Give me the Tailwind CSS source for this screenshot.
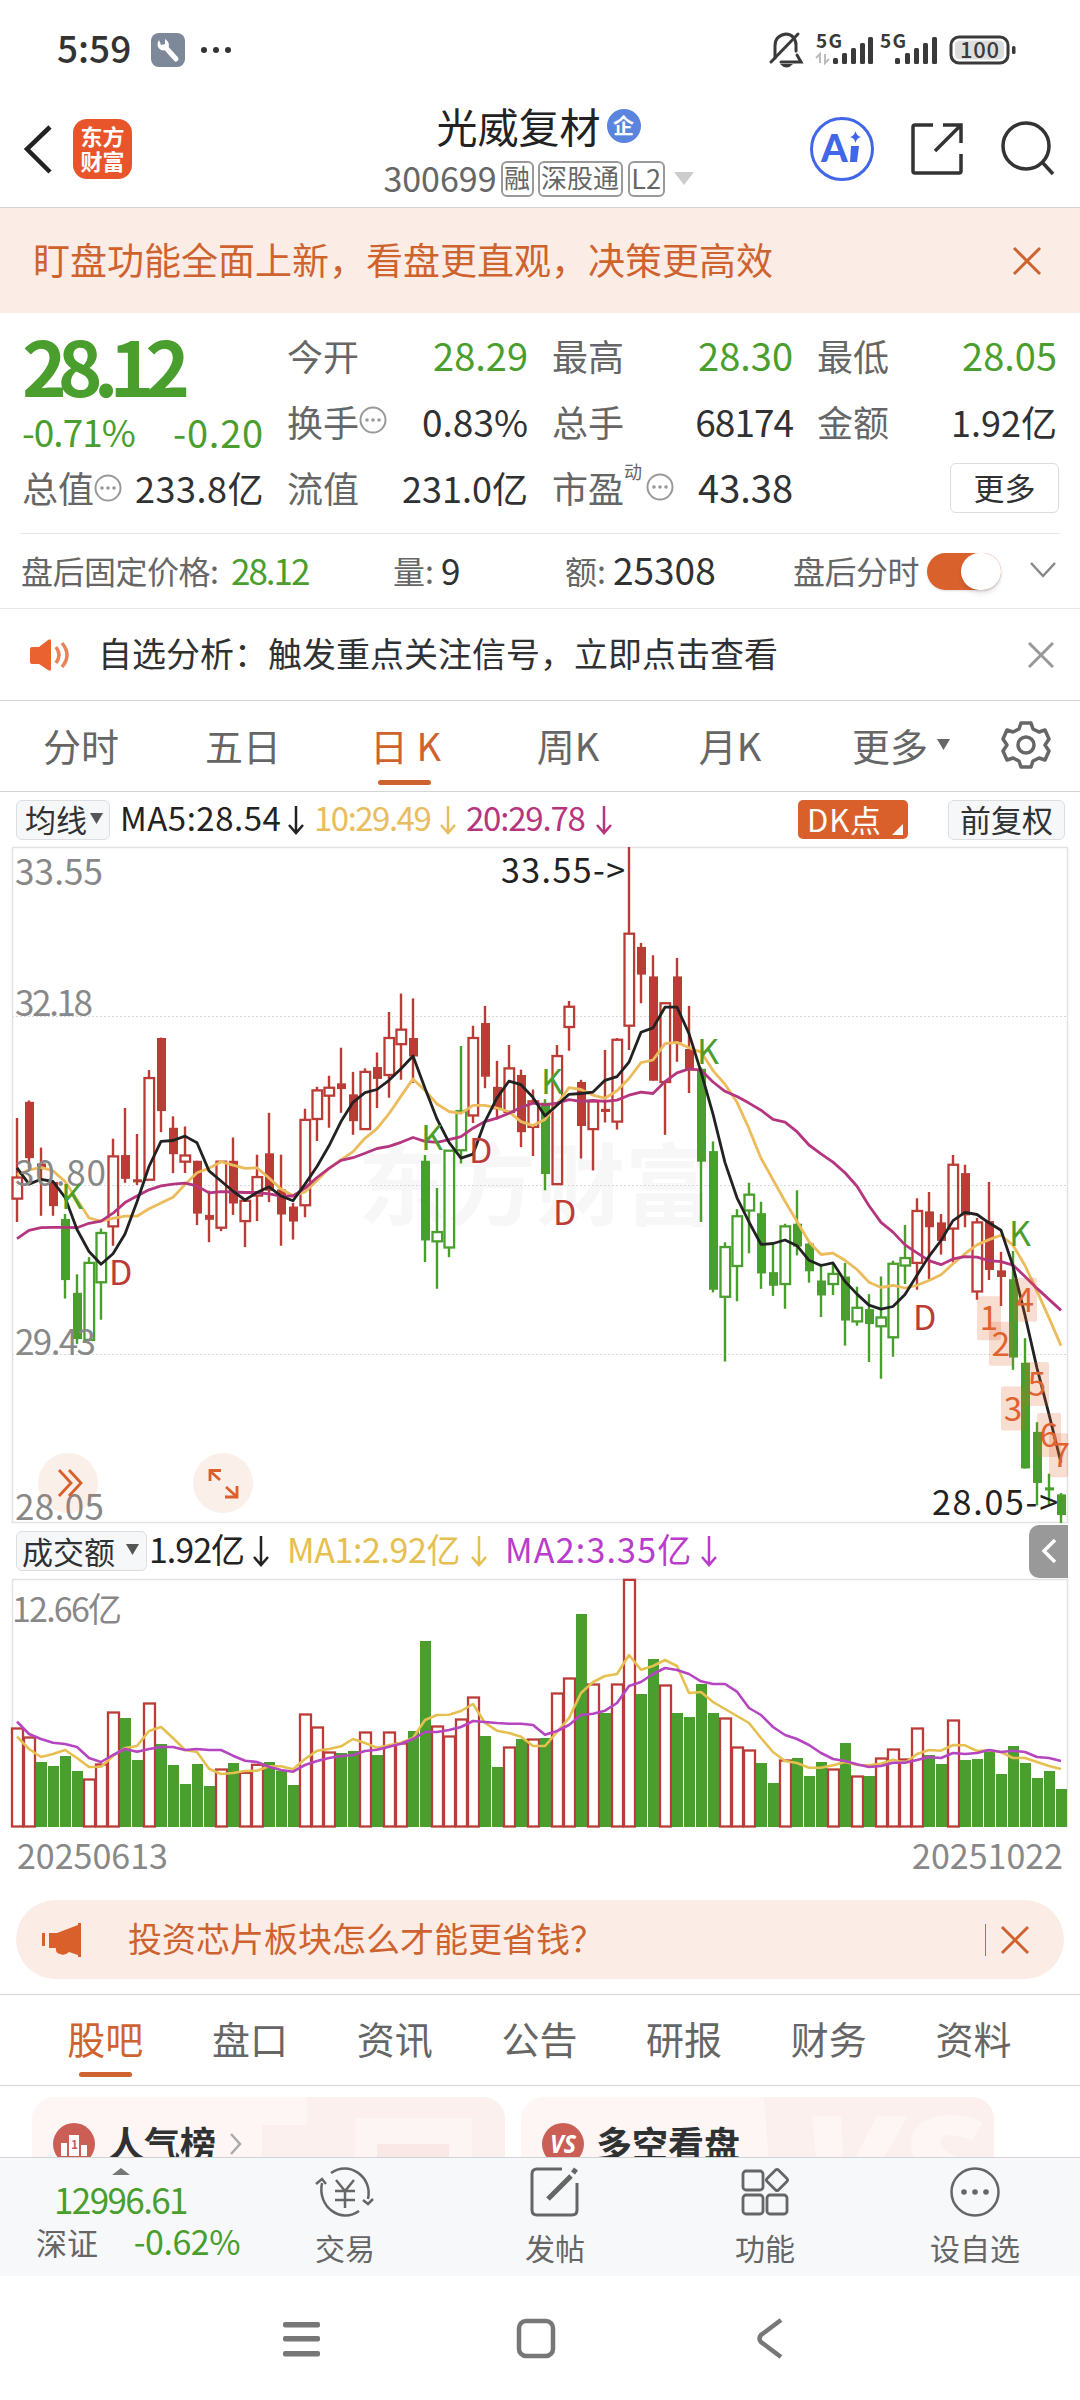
<!DOCTYPE html>
<html lang="zh-CN">
<head>
    <meta charset="UTF-8">
    <meta name="viewport" content="width=device-width, initial-scale=1.0">
    <title>光威复材 300699</title>
    <script src="https://cdn.jsdelivr.net/npm/@tailwindcss/browser@4"></script>
</head>
<body class="w-[1080px] h-[2400px] overflow-hidden bg-white text-[#303133] font-['Noto_Sans_CJK_SC',sans-serif] leading-none whitespace-nowrap">

    <!-- Status bar -->
    <div class="h-[92px] pt-[8px] pl-[57px] flex items-center text-[#333]">
        <span class="w-[94px] text-[37px] font-medium -mt-[5px]">5:59</span>
        <svg class="w-[34px] h-[34px]" viewBox="0 0 34 34">
            <rect width="34" height="34" rx="8" fill="#7d8899"/>
            <path d="M16 16 L25 26" stroke="#fff" stroke-width="5" stroke-linecap="round"/>
            <path d="M8 7 C4 13 9 19 15 17 C20 14 18 8 14 6 L14 11 L10 12 Z" fill="#fff"/>
        </svg>
        <svg class="ml-[15px] w-[32px] h-[8px]" viewBox="0 0 32 8" fill="#333"><circle cx="4" cy="4" r="3"/><circle cx="16" cy="4" r="3"/><circle cx="28" cy="4" r="3"/></svg>
        <svg class="ml-[537px] w-[250px] h-[40px] overflow-visible" viewBox="0 0 250 40">
            <g fill="none" stroke="#3a3a3a" stroke-width="3" stroke-linecap="round">
                <path d="M6 28 V16 C6 9 10 5 17 4 C23 4 27 9 27 15 V21"/>
                <path d="M29 4 L2 32 M12 32 H32 L28 25" />
            </g>
            <path d="M11 34 H24 Q17.500 41 11 34Z" fill="#3a3a3a"/>
            <g fill="#3a3a3a" font-family="Noto Sans CJK SC" font-size="19" font-weight="700">
                <text x="47" y="18" textLength="26">5G</text>
                <text x="111" y="18" textLength="26">5G</text>
            </g>
            <path d="M51 33 V24 L47 28 M56 24 V33 L60 29" fill="none" stroke="#bbb" stroke-width="2"/>
            <g fill="#3a3a3a">
                <rect x="64" y="28" width="5" height="6" rx="1.500"/><rect x="73" y="23" width="5" height="11" rx="1.500"/><rect x="82" y="18" width="5" height="16" rx="1.500"/><rect x="91" y="13" width="5" height="21" rx="1.500"/><rect x="99" y="7" width="5" height="27" rx="1.500"/>
                <rect x="126" y="28" width="5" height="6" rx="1.500"/><rect x="136" y="23" width="5" height="11" rx="1.500"/><rect x="145" y="18" width="5" height="16" rx="1.500"/><rect x="154" y="13" width="5" height="21" rx="1.500"/><rect x="163" y="7" width="5" height="27" rx="1.500"/>
            </g>
            <rect x="182" y="7" width="57" height="26" rx="8" fill="#fff" stroke="#3a3a3a" stroke-width="3"/>
            <rect x="186" y="10.500" width="49" height="19" rx="5" fill="#ddd"/>
            <rect x="243" y="16" width="3.500" height="8" rx="1.500" fill="#3a3a3a"/>
            <text x="191" y="28" font-family="Noto Sans CJK SC" font-size="22" font-weight="500" textLength="39" fill="#3a3a3a">100</text>
        </svg>
    </div>

    <!-- Header -->
    <header class="h-[116px] flex border-b border-[#d3d4d6]">
        <svg class="mt-[32px] ml-[22px] w-[32px] h-[50px]" viewBox="0 0 32 50" fill="none" stroke="#222" stroke-width="4.500"><path d="M28 3 L5 25 L28 48"/></svg>
        <div class="mt-[27px] ml-[19px] w-[59px] h-[60px] rounded-[14px] bg-[#e9552a] text-white font-bold text-[22px] leading-[25px] text-center pt-[4px]">东方<br>财富</div>
        <div class="w-[567px] pl-[246px] pt-[10px] flex flex-col items-center">
            <div class="flex items-center h-[46px]">
                <span class="text-[41px] text-[#222]">光威复材</span>
                <span class="ml-[6px] mt-[2px] w-[34px] h-[34px] rounded-full bg-[#5b84de] text-white text-[21px] font-bold flex items-center justify-center pb-[3px]">企</span>
            </div>
            <div class="flex items-center h-[36px] mt-[13px] text-[#666]">
                <span class="text-[34px] mr-[4px] -mt-[3px]">300699</span>
                <span class="h-[36px] w-[33px] border-2 border-[#999] rounded-[6px] text-[26px] flex justify-center pt-[1px]">融</span>
                <span class="ml-[4px] h-[36px] w-[85px] border-2 border-[#999] rounded-[6px] text-[26px] flex justify-center pt-[1px]">深股通</span>
                <span class="ml-[5px] h-[36px] w-[37px] border-2 border-[#999] rounded-[6px] text-[27px] flex justify-center pt-[1px]">L2</span>
                <svg class="ml-[9px] w-[20px] h-[14px]" viewBox="0 0 20 14"><path d="M0 0 H20 L10 13Z" fill="#ccc"/></svg>
            </div>
        </div>
        <svg class="mt-[24px] ml-[110px] w-[66px] h-[66px]" viewBox="0 0 66 66">
            <circle cx="33" cy="33" r="30.500" fill="#fff" stroke="#4166e8" stroke-width="3"/>
            <text x="12" y="46" font-family="Lato" font-weight="900" font-size="38" fill="#4166e8">A</text>
            <path d="M42 30 H50 L48 46 H41Z" fill="#4166e8"/>
            <path d="M46.500 15 Q47.500 20 52 21 Q47.500 22 46.500 27 Q45.500 22 41 21 Q45.500 20 46.500 15Z" fill="#4166e8"/>
        </svg>
        <svg class="mt-[28px] ml-[34px] w-[56px] h-[56px]" viewBox="0 0 56 56" fill="none" stroke="#333" stroke-width="3.500"><path d="M24 5 H6 Q4 5 4 7 V51 Q4 53 6 53 H50 Q52 53 52 51 V34 M34 5 H52 V23 M51 6 L26 31"/></svg>
        <svg class="mt-[26px] ml-[34px] w-[58px] h-[58px]" viewBox="0 0 58 58" fill="none" stroke="#333" stroke-width="3.500"><circle cx="27" cy="28" r="23"/><path d="M43 44 L54 56"/></svg>
    </header>

    <!-- Notice banner -->
    <div class="h-[105px] pl-[33px] pr-[38px] flex items-center justify-between bg-[#fbede6] text-[#cf632f]">
        <span class="text-[37px] -mt-[2px]">盯盘功能全面上新，看盘更直观，决策更高效</span>
        <svg class="w-[30px] h-[30px]" viewBox="0 0 30 30" stroke="#cf632f" stroke-width="3"><path d="M2 2 L28 28 M28 2 L2 28"/></svg>
    </div>

    <!-- Quote -->
    <section class="h-[221px] mx-[20px] border-b border-[#e8e8e8] flex text-[36px]">
        <div class="w-[244px] pl-[2px] pt-[9px] text-[#4a9e2e]">
            <div class="h-[87px] text-[76px] font-bold tracking-[-9px] leading-[84px]">28.12</div>
            <div class="h-[45px] flex items-center justify-between text-[37px]"><span class="tracking-[-1px]">-0.71%</span><span class="text-[38px] tracking-[0.800px]">-0.20</span></div>
            <div class="h-[66px] flex items-center text-[#303133]">
                <span class="text-[#666]">总值</span>
                <svg class="mt-[2px] w-[28px] h-[28px] shrink-0" viewBox="0 0 28 28" fill="#999"><circle cx="14" cy="14" r="12.500" fill="none" stroke="#999" stroke-width="2"/><circle cx="8" cy="14" r="1.800"/><circle cx="14" cy="14" r="1.800"/><circle cx="20" cy="14" r="1.800"/></svg>
                <span class="ml-auto tracking-[0.500px]">233.8亿</span>
            </div>
        </div>
        <div class="ml-[23px] pt-[9px] w-[771px] grid grid-cols-[241px_241px_240px] gap-x-[24px] grid-rows-[66px_66px_66px]">
            <div class="flex items-center justify-between"><span class="text-[#666]">今开</span><span class="text-[#4a9e2e] text-[38px]">28.29</span></div>
            <div class="flex items-center justify-between"><span class="text-[#666]">最高</span><span class="text-[#4a9e2e] text-[38px]">28.30</span></div>
            <div class="flex items-center justify-between"><span class="text-[#666]">最低</span><span class="text-[#4a9e2e] text-[38px]">28.05</span></div>
            <div class="flex items-center">
                <span class="text-[#666]">换手</span>
                <svg class="mt-[-2px] w-[28px] h-[28px]" viewBox="0 0 28 28" fill="#999"><circle cx="14" cy="14" r="12.500" fill="none" stroke="#999" stroke-width="2"/><circle cx="8" cy="14" r="1.800"/><circle cx="14" cy="14" r="1.800"/><circle cx="20" cy="14" r="1.800"/></svg>
                <span class="ml-auto text-[37px]">0.83%</span>
            </div>
            <div class="flex items-center justify-between"><span class="text-[#666]">总手</span><span class="text-[37px] tracking-[-1px]">68174</span></div>
            <div class="flex items-center justify-between"><span class="text-[#666]">金额</span><span>1.92亿</span></div>
            <div class="flex items-center justify-between"><span class="text-[#666]">流值</span><span>231.0亿</span></div>
            <div class="flex items-center">
                <span class="text-[#666]">市盈</span><span class="text-[18px] text-[#666] -mt-[32px]">动</span>
                <svg class="ml-[4px] w-[28px] h-[28px] shrink-0" viewBox="0 0 28 28" fill="#999"><circle cx="14" cy="14" r="12.500" fill="none" stroke="#999" stroke-width="2"/><circle cx="8" cy="14" r="1.800"/><circle cx="14" cy="14" r="1.800"/><circle cx="20" cy="14" r="1.800"/></svg>
                <span class="ml-auto text-[38px]">43.38</span>
            </div>
            <div class="flex items-center justify-end -mr-[2px]"><span class="w-[109px] h-[50px] mt-[2px] border border-[#ddd] rounded-[6px] text-[31px] flex items-center justify-center pb-[3px]">更多</span></div>
        </div>
    </section>

    <!-- After-hours -->
    <div class="h-[75px] pb-[3px] pl-[21px] pr-[23px] flex items-center border-b border-[#e8e8e8] text-[32px] text-[#666]">
        <span class="w-[210px] tracking-[-0.500px]">盘后固定价格:</span><span class="w-[162px] text-[35px] text-[#4a9e2e] tracking-[-2px]">28.12</span>
        <span class="w-[48px]">量:</span><span class="w-[124px] text-[35px] text-[#303133]">9</span>
        <span class="w-[48px]">额:</span><span class="w-[180px] text-[37px] text-[#303133]">25308</span>
        <span class="w-[134px] tracking-[-0.500px]">盘后分时</span>
        <span class="mt-[4px] w-[74px] h-[37px] rounded-full bg-[#d9622c] flex justify-end shadow-sm"><span class="w-[40px] h-[37px] rounded-full bg-white shadow-md"></span></span>
        <svg class="ml-[28px] w-[28px] h-[18px]" viewBox="0 0 28 18" fill="none" stroke="#888" stroke-width="2.500"><path d="M2 2 L14 15 L26 2"/></svg>
    </div>

    <!-- Signal notice -->
    <div class="h-[92px] pl-[29px] pr-[26px] flex items-center border-b border-[#d3d4d6]">
        <svg class="w-[42px] h-[34px]" viewBox="0 0 42 34"><path d="M1 11 Q1 9 3 9 H10 L19 2 Q22 0 22 3 V31 Q22 34 19 32 L10 26 H3 Q1 26 1 24Z" fill="#e9622f"/><path d="M27 9 Q33 17 27 25 M33 5 Q43 17 33 29" fill="none" stroke="#e9835a" stroke-width="3.500"/></svg>
        <span class="ml-[27px] text-[34px] -mt-[4px]">自选分析：触发重点关注信号，立即点击查看</span>
        <svg class="ml-auto w-[26px] h-[26px]" viewBox="0 0 26 26" stroke="#999" stroke-width="3"><path d="M1 1 L25 25 M25 1 L1 25"/></svg>
    </div>

    <!-- Period tabs -->
    <nav class="h-[91px] pb-[3px] flex items-center border-b border-[#d3d4d6] text-[38px] text-[#666]">
        <span class="w-[162px] text-center">分时</span>
        <span class="w-[162px] text-center">五日</span>
        <span class="relative w-[163px] text-center text-[#cf632f]">日 K<i class="absolute left-[54px] top-[54px] w-[53px] h-[5px] rounded-full bg-[#cf632f]"></i></span>
        <span class="w-[162px] text-center">周K</span>
        <span class="w-[162px] text-center">月K</span>
        <span class="ml-[41px] w-[85px]">更多</span>
        <svg class="w-[14px] h-[12px]" viewBox="0 0 14 12"><path d="M0 0 H13 L6.500 11Z" fill="#666"/></svg>
        <svg class="ml-[50px] w-[50px] h-[50px]" viewBox="0 0 50 50" fill="none" stroke="#666" stroke-width="3.500" stroke-linejoin="round"><path d="M20 3 H30 L32 9 L38 12 L44 10 L48 19 L44 25 L48 31 L44 40 L38 38 L32 41 L30 47 H20 L18 41 L12 38 L6 40 L2 31 L6 25 L2 19 L6 10 L12 12 L18 9Z"/><circle cx="25" cy="25" r="8"/></svg>
    </nav>

    <!-- Moving average legend -->
    <div class="h-[55px] pl-[16px] flex items-center text-[33px]">
        <span class="w-[94px] h-[40px] border border-[#dcdee2] rounded-[6px] bg-[#f6f7f9] text-[31px] flex items-center pl-[8px] pb-[2px]">均线<svg class="ml-[3px] w-[13px] h-[12px]" viewBox="0 0 13 12"><path d="M0 0 H13 L6.500 11Z" fill="#555"/></svg></span>
        <span class="ml-[10px] w-[168px] -mt-[4px] tracking-[0.500px] text-[#222]">MA5:28.54</span>
        <svg class="w-[16px] h-[30px]" viewBox="0 0 16 30" fill="none" stroke="#222" stroke-width="2.500"><path d="M8 1 V28 M1 20 L8 28 L15 20"/></svg>
        <span class="ml-[10px] w-[126px] -mt-[4px] tracking-[-1.500px] text-[#e8bd5f]">10:29.49</span>
        <svg class="w-[16px] h-[30px]" viewBox="0 0 16 30" fill="none" stroke="#e8bd5f" stroke-width="2.500"><path d="M8 1 V28 M1 20 L8 28 L15 20"/></svg>
        <span class="ml-[10px] w-[130px] -mt-[4px] tracking-[-1.200px] text-[#b5357f]">20:29.78</span>
        <svg class="w-[16px] h-[30px]" viewBox="0 0 16 30" fill="none" stroke="#b5357f" stroke-width="2.500"><path d="M8 1 V28 M1 20 L8 28 L15 20"/></svg>
        <span class="relative ml-[186px] w-[110px] h-[39px] rounded-[5px] bg-[#d9602b] text-white text-[31px] tracking-[0.800px] flex items-center pl-[9px] pb-[2px]">DK点<svg class="absolute right-[5px] bottom-[4px] w-[11px] h-[11px]" viewBox="0 0 11 11"><path d="M11 0 V11 H0Z" fill="#fff"/></svg></span>
        <span class="ml-[40px] w-[117px] h-[40px] border border-[#dcdee2] rounded-[6px] bg-[#f6f7f9] text-[31px] flex items-center justify-center pb-[2px]">前复权</span>
    </div>

    <!-- Candle chart -->
    <div class="relative h-[676px]">
        <svg id="price" class="block w-[1080px] h-[676px] overflow-visible" viewBox="0 0 1080 676" font-family="Noto Sans CJK SC" font-size="34">
            <text x="358" y="371" font-size="89" font-weight="700" fill="#f7f7f7">东方财富</text>
            <g stroke="#d8d8d8" stroke-dasharray="2 2"><path d="M12 169.500 H1068 M12 338.500 H1068 M12 507.500 H1068"/></g>
            <rect x="12.500" y="0.500" width="1055" height="675" fill="none" stroke="#e2e2e2" stroke-width="1.500"/>
            <g id="candles"></g>
            <g id="priceLines" fill="none" stroke-width="2.800" stroke-linejoin="round"></g>
            <g fill="#888" font-size="35">
                <text x="15" y="38" textLength="88">33.55</text><text x="15" y="169" textLength="78">32.18</text><text x="15" y="339" textLength="91">30.80</text><text x="15" y="508" textLength="81">29.43</text><text x="15" y="673" textLength="89">28.05</text>
            </g>
            <g id="marks"></g>
            <text x="501" y="36" textLength="124" fill="#222">33.55-&gt;</text>
            <text x="932" y="668" textLength="126" fill="#222">28.05-&gt;</text>
            <circle cx="68" cy="636" r="30" fill="#d9602b" fill-opacity="0.1"/>
            <circle cx="223" cy="636" r="30" fill="#d9602b" fill-opacity="0.1"/>
            <path d="M59 623 L71 636 L59 649 M69 623 L81 636 L69 649" fill="none" stroke="#d9602b" stroke-width="2.800"/>
            <path d="M220 633 L210 624 M210 634 V623.500 H221 M226 640 L236 649 M237 639 V650 H225" fill="none" stroke="#d9602b" stroke-width="2.800"/>
        </svg>
    </div>

    <!-- Turnover legend -->
    <div class="h-[56px] pl-[16px] flex items-center text-[34px]">
        <span class="w-[131px] h-[40px] border border-[#dcdee2] rounded-[6px] bg-[#f6f7f9] text-[31px] flex items-center pl-[5px] pb-[2px]">成交额<svg class="ml-[11px] w-[13px] h-[12px]" viewBox="0 0 13 12"><path d="M0 0 H13 L6.500 11Z" fill="#555"/></svg></span>
        <span class="ml-[2px] w-[104px] -mt-[4px] tracking-[-1px] text-[#222]">1.92亿</span>
        <svg class="w-[16px] h-[32px]" viewBox="0 0 16 32" fill="none" stroke="#222" stroke-width="2.500"><path d="M8 1 V30 M1 22 L8 30 L15 22"/></svg>
        <span class="ml-[18px] w-[184px] -mt-[4px] tracking-[-0.400px] text-[#e6c04f]">MA1:2.92亿</span>
        <svg class="w-[16px] h-[32px]" viewBox="0 0 16 32" fill="none" stroke="#e6c04f" stroke-width="2.500"><path d="M8 1 V30 M1 22 L8 30 L15 22"/></svg>
        <span class="ml-[18px] w-[196px] -mt-[4px] tracking-[1.200px] text-[#b93ccb]">MA2:3.35亿</span>
        <svg class="w-[16px] h-[32px]" viewBox="0 0 16 32" fill="none" stroke="#b93ccb" stroke-width="2.500"><path d="M8 1 V30 M1 22 L8 30 L15 22"/></svg>
        <span class="ml-auto mr-[12px] w-[39px] h-[53px] rounded-l-[10px] bg-[#999] flex items-center justify-center z-10"><svg class="w-[16px] h-[26px]" viewBox="0 0 16 26" fill="none" stroke="#fff" stroke-width="3.500"><path d="M14 2 L3 13 L14 24"/></svg></span>
    </div>

    <!-- Turnover chart -->
    <svg id="volume" class="block w-[1080px] h-[249px] overflow-visible" viewBox="0 0 1080 249" font-family="Noto Sans CJK SC">
        <path d="M12.500 248 V0.500 H1067.500 V248" fill="none" stroke="#e2e2e2" stroke-width="1.500"/>
        <g id="bars"></g>
        <g id="volumeLines" fill="none" stroke-width="2.600" stroke-linejoin="round"></g>
        <text x="12" y="43" font-size="34" textLength="110" fill="#888">12.66亿</text>
    </svg>
    <div class="h-[72px] px-[17px] pb-[19px] flex items-center justify-between text-[34px] text-[#888]"><span>20250613</span><span>20251022</span></div>

    <!-- Promo -->
    <div class="mx-[16px] h-[79px] rounded-[40px] bg-[#fbede6] flex items-center text-[#cf632f]">
        <svg class="ml-[25px] w-[42px] h-[36px]" viewBox="0 0 42 36"><path d="M1 11 H4 V24 H1Z M8 11 H16 L37 3 V1 H40 V35 H37 V33 L28 30 Q24 34 19 32 Q14 31 15 26 H8Z" fill="#d9602b"/></svg>
        <span class="ml-[45px] text-[34px] -mt-[3px]">投资芯片板块怎么才能更省钱？</span>
        <i class="ml-auto w-px h-[32px] bg-[#cf632f]"></i>
        <svg class="ml-[14px] mr-[34px] w-[30px] h-[30px]" viewBox="0 0 30 30" stroke="#cf632f" stroke-width="3"><path d="M2 2 L28 28 M28 2 L2 28"/></svg>
    </div>

    <!-- Content tabs -->
    <nav class="mt-[15px] h-[92px] pl-[33px] pb-[4px] flex items-center border-y border-[#d3d4d6] text-[38px] text-[#666]">
        <span class="relative w-[144.700px] text-center text-[#cf632f]">股吧<i class="absolute left-[46px] top-[53px] w-[53px] h-[5px] rounded-full bg-[#cf632f]"></i></span>
        <span class="w-[144.700px] text-center">盘口</span>
        <span class="w-[144.700px] text-center">资讯</span>
        <span class="w-[144.700px] text-center">公告</span>
        <span class="w-[144.700px] text-center">研报</span>
        <span class="w-[144.700px] text-center">财务</span>
        <span class="w-[144.700px] text-center">资料</span>
    </nav>

    <!-- Cards, cut off by the bottom bar -->
    <div class="h-[71px] pt-[11px] pl-[32px] flex gap-[16px] overflow-hidden">
        <div class="relative w-[473px] h-[120px] rounded-[22px] bg-[#fdf6f4] overflow-hidden">
            <svg class="absolute inset-0 w-[473px] h-[120px]" viewBox="0 0 473 120"><path d="M275 0 H473 V120 H230 V28 H275Z" fill="#fbf0ee"/><path d="M323 21 H440 V120 H417 V47 H345 V120 H323Z" fill="#fdf5f3"/><rect x="345" y="47" width="72" height="60" fill="#f9e8e6"/></svg>
            <div class="relative flex items-center pl-[21px] pt-[26px]">
                <svg class="w-[42px] h-[42px]" viewBox="0 0 42 42"><circle cx="21" cy="21" r="21" fill="#cb5f56"/><path d="M8 20 H14 V33 H8Z M16 12 H26 V33 H16Z M28 22 H34 V33 H28Z" fill="#fff"/><text x="18" y="26" font-size="12" font-weight="700" fill="#cb5f56">1</text></svg>
                <span class="ml-[13px] text-[36px] font-bold -mt-[5px]">人气榜</span>
                <svg class="ml-[13px] w-[14px] h-[22px]" viewBox="0 0 14 22" fill="none" stroke="#aaa" stroke-width="2.500"><path d="M2 1 L11 11 L2 21"/></svg>
            </div>
        </div>
        <div class="relative w-[473px] h-[120px] rounded-[22px] bg-[#fdf6f4] overflow-hidden">
            <svg class="absolute inset-0 w-[473px] h-[120px]" viewBox="0 0 473 120"><path d="M243 0 H473 V120 H252Z" fill="#fbf0ee"/><text x="280" y="112" font-family="Open Sans" font-size="130" font-weight="800" font-style="italic" textLength="180" lengthAdjust="spacingAndGlyphs" fill="#fdf6f4">VS</text></svg>
            <div class="relative flex items-center pl-[21px] pt-[26px]">
                <svg class="w-[42px] h-[42px]" viewBox="0 0 42 42"><circle cx="21" cy="21" r="21" fill="#cb5f56"/><text x="8" y="30" font-family="Open Sans" font-size="25" font-weight="700" font-style="italic" fill="#fff" textLength="26" lengthAdjust="spacingAndGlyphs">VS</text></svg>
                <span class="ml-[12px] text-[36px] font-bold -mt-[5px]">多空看盘</span>
            </div>
        </div>
    </div>

    <!-- Bottom bar -->
    <footer class="h-[119px] flex bg-[#f7f8fa] border-t border-[#d0d2d5] text-[30px] text-[#666]">
        <div class="w-[240px] pl-[36px] flex flex-col">
            <svg class="ml-[76px] mt-[10px] w-[18px] h-[7px]" viewBox="0 0 18 7"><path d="M9 0 L18 7 H0Z" fill="#777"/></svg>
            <span class="pl-[18px] mt-[6px] text-[35px] tracking-[-1.600px] text-[#4a9e2e]">12996.61</span>
            <span class="flex justify-between items-center mt-[8px] text-[31px]">深证<span class="text-[34px] text-[#4a9e2e] tracking-[-0.500px]">-0.62%</span></span>
        </div>
        <div class="w-[210px] pt-[7px] flex flex-col items-center">
            <svg class="w-[60px] h-[54px]" viewBox="0 0 60 54" fill="none" stroke="#666" stroke-width="2.500"><path d="M16 8 C34 -5 58 12 53 34 M44 46 C26 59 2 42 7 18 M1 19 L7 14 L11 19 M48 35 L53 39 L58 34 M21 15 L30 26 L39 15 M20 26 H40 M20 35 H40 M30 26 V43"/></svg>
            <span class="mt-[13px]">交易</span>
        </div>
        <div class="w-[210px] pt-[7px] flex flex-col items-center">
            <svg class="w-[54px] h-[54px]" viewBox="0 0 54 54" fill="none" stroke="#666" stroke-width="3"><path d="M34 4 H9 Q4 4 4 9 V45 Q4 50 9 50 H44 Q49 50 49 45 V18"/><path d="M20 34 L43 11 M45 8 L48 4" stroke-width="5"/></svg>
            <span class="mt-[13px]">发帖</span>
        </div>
        <div class="w-[210px] pt-[7px] flex flex-col items-center">
            <svg class="w-[54px] h-[54px]" viewBox="0 0 54 54" fill="none" stroke="#666" stroke-width="2.800"><rect x="5" y="6" width="20" height="19" rx="3"/><rect x="5" y="30" width="20" height="19" rx="3"/><rect x="29" y="30" width="20" height="19" rx="3"/><rect x="31" y="7" width="16" height="16" rx="2" transform="rotate(45 39 15)"/></svg>
            <span class="mt-[13px]">功能</span>
        </div>
        <div class="w-[210px] pt-[7px] flex flex-col items-center">
            <svg class="w-[54px] h-[54px]" viewBox="0 0 54 54" fill="#666"><circle cx="27" cy="27" r="23.500" fill="none" stroke="#666" stroke-width="2.500"/><circle cx="16" cy="27" r="2.800"/><circle cx="27" cy="27" r="2.800"/><circle cx="38" cy="27" r="2.800"/></svg>
            <span class="mt-[13px]">设自选</span>
        </div>
    </footer>

    <!-- System navigation -->
    <div class="h-[124px] pt-[41px] flex">
        <svg class="ml-[283px] w-[38px] h-[44px]" viewBox="0 0 38 44" fill="#777"><rect y="5" width="37" height="5.500" rx="2"/><rect y="19" width="37" height="5.500" rx="2"/><rect y="34" width="37" height="5.500" rx="2"/></svg>
        <svg class="ml-[195px] w-[40px] h-[44px]" viewBox="0 0 40 44"><rect x="3" y="4" width="34" height="35" rx="7" fill="none" stroke="#777" stroke-width="4.500"/></svg>
        <svg class="ml-[200px] w-[28px] h-[44px]" viewBox="0 0 28 44" fill="none" stroke="#777" stroke-width="4.500"><path d="M25 3 L5 18 Q2 21.500 5 25 L25 40"/></svg>
    </div>

    <script>
        const RED = '#bb3c36', GREEN = '#4a9e2e';
        const STEP = 12, X0 = 17;
        const xOf = i => X0 + i * STEP;

        // high, body top, body bottom, low, kind (lower case = hollow), on a 16..1552 axis
        const candles = [
            [632,767,815,868,'r'],[592,595,723,745,'R'],[699,735,748,854,'R'],[777,777,832,854,'R'],[850,861,1000,1042,'G'],[987,1029,1134,1145,'G'],
            [948,961,1136,1136,'g'],[883,893,1005,1090,'g'],[679,719,878,922,'r'],[609,716,770,779,'R'],[668,771,778,784,'R'],[523,541,772,772,'r'],
            [449,450,616,664,'R'],[628,654,714,757,'R'],[651,717,731,757,'r'],[729,729,849,875,'R'],[797,852,863,914,'R'],[731,731,881,889,'r'],
            [676,729,826,852,'R'],[820,820,866,925,'r'],[715,766,808,866,'r'],[620,712,797,823,'R'],[715,794,851,922,'R'],[825,833,867,908,'R'],
            [611,636,830,857,'r'],[561,569,634,684,'r'],[536,563,581,654,'r'],[472,553,566,620,'R'],[527,578,639,670,'R'],[519,527,657,657,'r'],
            [483,516,543,609,'R'],[391,450,534,586,'r'],[349,431,464,545,'r'],[360,450,492,552,'R'],[716,729,910,959,'G'],[791,891,912,1020,'g'],
            [706,706,926,948,'g'],[468,616,705,735,'g'],[422,450,626,643,'r'],[377,416,538,564,'R'],[502,561,612,635,'R'],[466,519,618,622,'r'],
            [522,534,664,698,'R'],[567,594,652,718,'r'],[589,597,759,796,'G'],[466,491,782,782,'r'],[366,379,425,479,'r'],[545,550,650,724,'R'],
            [594,594,657,751,'r'],[477,611,618,642,'R'],[450,454,640,658,'r'],[16,213,422,477,'r'],[234,243,306,371,'R'],[262,310,547,547,'R'],
            [371,371,550,670,'r'],[268,310,460,504,'R'],[377,475,524,575,'R'],[517,520,731,868,'G'],[685,707,1022,1028,'G'],[914,925,1038,1185,'g'],
            [839,855,968,1048,'g'],[779,806,842,939,'g'],[822,848,985,1020,'G'],[919,982,1013,1036,'G'],[872,878,1009,1065,'g'],[796,872,924,944,'G'],
            [916,917,980,1006,'G'],[963,1001,1035,1084,'G'],[961,986,1009,1034,'g'],[961,992,1092,1149,'G'],[1015,1063,1094,1104,'g'],[1032,1066,1100,1186,'G'],
            [992,1085,1105,1224,'g'],[956,963,1130,1174,'g'],[875,950,967,1009,'g'],[814,843,961,1022,'r'],[800,844,880,998,'R'],[850,869,911,942,'R'],
            [716,738,883,960,'r'],[738,757,853,880,'R'],[859,869,1026,1045,'r'],[777,866,977,1000,'R'],[936,978,993,1059,'R'],[934,998,1176,1204,'G'],
            [1132,1188,1428,1428,'G'],[1323,1345,1461,1512,'G'],[1440,1471,1478,1512,'G'],[1484,1487,1534,1552,'G']
        ];
        const ma5 = [745,782,771,776,812,885,935,964,940,895,822,742,685,683,673,688,752,775,798,818,801,788,809,820,782,742,695,640,596,574,567,546,520,491,564,634,687,723,714,640,586,548,556,585,627,603,578,576,573,546,538,505,437,427,380,380,440,527,623,733,813,868,919,917,909,922,955,967,961,1003,1032,1057,1066,1060,1033,989,946,910,865,846,851,870,887,968,1080,1200,1305,1415];
        const ma10 = [761,750,744,752,776,817,859,866,860,855,855,838,825,812,783,756,746,731,739,746,745,768,793,808,800,774,746,727,708,678,656,622,582,543,569,600,617,621,603,603,609,618,640,649,635,600,563,567,580,587,570,542,506,500,463,460,472,482,524,555,596,656,723,772,821,867,913,942,939,955,976,1005,1017,1012,1018,1012,1001,988,963,940,920,908,898,921,967,1025,1086,1149];
        const ma20 = [906,887,881,880,880,881,871,866,848,824,809,795,786,782,780,786,802,799,800,801,801,804,809,809,791,767,746,728,722,712,701,696,687,676,685,687,681,674,655,640,632,621,608,598,602,598,590,594,592,594,591,580,573,576,549,529,520,523,550,571,583,598,614,635,641,663,693,713,732,756,787,831,869,891,920,938,956,965,952,947,948,956,958,966,992,1019,1044,1069];
        const py = v => (v - 16) * 676 / 1536;

        // Turnover bar tops on a 177..921 axis, r = hollow red, G = green
        const bars = '624r 651r 726G 738G 708G 753G 777r 732r 576r 594G 720G 549r 672G 735G 792G 732G 798G 747r 729G 757r 733r 726G 752G 795G 582r 621r 696r 699G 693G 636r 705G 636r 669r 633G 363G 618r 648r 597r 531r 648G 741G 681r 657G 657r 654G 519r 474r 282G 492r 579G 492r 178r 522G 417G 495r 579G 591G 492G 579G 594r 681r 690r 729G 789G 720r 714G 768G 726G 747r 669G 768r 768G 714r 687r 717r 624r 705G 732G 600r 720G 717G 690G 762G 678G 729G 774G 753G 807G'.split(' ');
        const vma1 = [650,687,711,702,690,714,741,740,708,684,678,633,621,654,690,696,746,762,759,753,752,739,739,748,717,692,687,679,657,669,683,676,668,654,600,585,584,573,552,609,632,639,650,678,678,636,594,519,486,468,462,405,449,438,420,438,519,516,546,567,588,609,654,696,723,729,743,743,736,726,735,736,731,719,728,702,690,692,675,676,693,691,696,714,714,726,738,747];
        const vma2 = [605,642,657,668,672,681,714,726,705,687,695,687,681,681,690,687,690,690,707,722,726,740,750,755,735,723,714,708,705,693,689,680,671,657,636,636,630,621,603,606,609,611,611,615,644,633,615,585,581,572,549,498,486,462,444,450,462,484,492,492,515,564,585,621,645,657,675,699,717,723,733,741,738,728,728,720,711,714,699,702,699,690,696,692,696,711,714,723];
        const vy = v => (v - 177) / 3;

        document.getElementById('candles').innerHTML = candles.map(([h, t, b, l, k], i) => {
            const x = xOf(i), c = k.toLowerCase() === 'r' ? RED : GREEN;
            if (k === 'r' || k === 'g') {
                return `<path d="M${x} ${py(h)}V${py(t)}M${x} ${py(b)}V${py(l)}" stroke="${c}" stroke-width="2.4"/>
                    <rect x="${x - 4.5}" y="${py(t)}" width="9.6" height="${py(b) - py(t)}" fill="none" stroke="${c}" stroke-width="2.3"/>`;
            }
            return `<path d="M${x} ${py(h)}V${py(l)}" stroke="${c}" stroke-width="2.4"/><rect x="${x - 4}" y="${py(t)}" width="9" height="${py(b) - py(t)}" fill="${c}"/>`;
        }).join('');

        const line = (data, y, color) => `<polyline stroke="${color}" points="${data.map((v, i) => xOf(i) + ',' + y(v).toFixed(1)).join(' ')}"/>`;
        document.getElementById('priceLines').innerHTML = line(ma10, py, '#ecbc5c') + line(ma20, py, '#b5357f') + line(ma5, py, '#222');

        document.getElementById('bars').innerHTML = bars.map((s, i) => {
            const y = vy(parseInt(s)), x = xOf(i);
            return s.endsWith('G')
                ? `<rect x="${x - 5}" y="${y}" width="11" height="${248 - y}" fill="${GREEN}"/>`
                : `<rect x="${x - 5}" y="${y + 0.5}" width="11" height="${247 - y}" fill="#fff" stroke="${RED}" stroke-width="2.3"/>`;
        }).join('');
        document.getElementById('volumeLines').innerHTML = line(vma1, vy, '#e6c04f') + line(vma2, vy, '#b545c0');

        // K / D signals and the numbered run at the end
        const signals = [['K', 61, 362], ['K', 421, 303], ['K', 541, 247], ['K', 697, 217], ['K', 1009, 399], ['D', 109, 438], ['D', 469, 316], ['D', 553, 378], ['D', 913, 483]];
        const runs = [[977, 1037], [989, 1095], [1001, 1242], [1013, 995], [1025, 1186], [1037, 1302], [1049, 1348]];
        document.getElementById('marks').innerHTML =
            signals.map(([s, x, y]) => `<text x="${x}" y="${y}" fill="${s === 'K' ? GREEN : RED}">${s}</text>`).join('') +
            runs.map(([x, v], i) => `<rect x="${x}" y="${py(v)}" width="${Math.min(24, 1068 - x)}" height="44" rx="2" fill="#e0622f" fill-opacity="0.22"/>
                <text x="${x + 12}" y="${py(v) + 34}" text-anchor="middle" font-size="33" fill="#e0622f">${i + 1}</text>`).join('');
    </script>
</body>
</html>
